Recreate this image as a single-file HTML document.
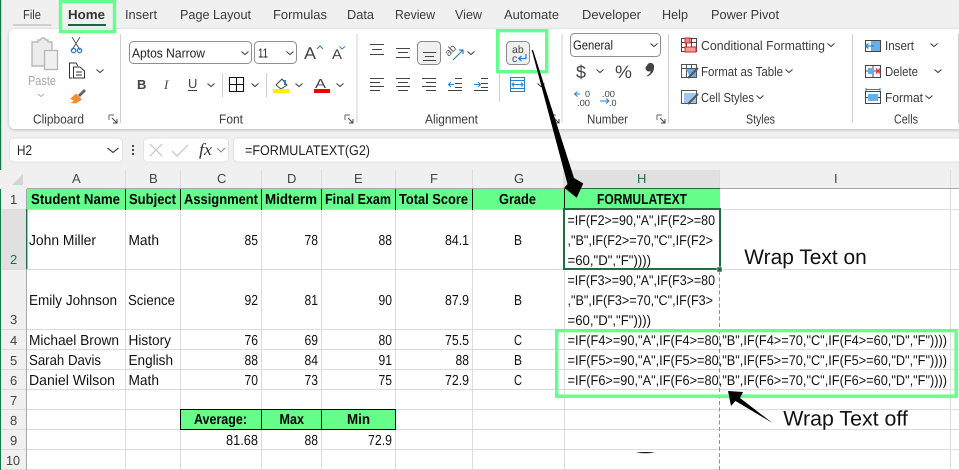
<!DOCTYPE html>
<html><head><meta charset="utf-8"><style>
html,body{margin:0;padding:0;background:#f0f0f0;width:959px;height:470px;overflow:hidden}
svg{display:block}
text{font-family:"Liberation Sans",sans-serif;white-space:pre}
.t{font-size:13px;fill:#3a3a3a}
.h{font-size:13px;fill:#444}
.c{font-size:14.500px;fill:#111}
.b{font-size:14.500px;font-weight:bold;fill:#000}
.f{font-size:14px;fill:#111}
.a{font-size:21px;fill:#111}
.ln{stroke:#444;stroke-width:1;fill:none}
.ch{fill:none;stroke:#444;stroke-width:1.1}
</style></head><body>
<svg width="959" height="470" viewBox="0 0 959 470" xmlns="http://www.w3.org/2000/svg" shape-rendering="geometricPrecision" text-rendering="geometricPrecision">
<defs>
<path id="chev" class="ch" d="M-3.5 -1.5L0 1.5L3.5 -1.5"/>
<g id="launch"><path d="M-4 -4H1M-4 -4V1" fill="none" stroke="#666" stroke-width="1"/><path d="M-1 -1L4 4M4 0V4H0" fill="none" stroke="#444" stroke-width="1"/></g>
<filter id="sh" x="-2%" y="-10%" width="104%" height="125%"><feDropShadow dx="0" dy="1" stdDeviation="1.5" flood-color="#000" flood-opacity=".22"/></filter>
</defs>
<rect width="959" height="470" fill="#f0f0f0"/>
<rect x="0" width="1.2" height="470" fill="#107c41"/>

<!-- Tabs -->
<g class="t">
<text x="23" y="19" textLength="18" lengthAdjust="spacingAndGlyphs">File</text>
<text x="68" y="19" textLength="37" lengthAdjust="spacingAndGlyphs" font-weight="bold" style="fill:#333">Home</text>
<text x="125" y="19" textLength="32" lengthAdjust="spacingAndGlyphs">Insert</text>
<text x="180" y="19" textLength="71" lengthAdjust="spacingAndGlyphs">Page Layout</text>
<text x="273" y="19" textLength="54" lengthAdjust="spacingAndGlyphs">Formulas</text>
<text x="347" y="19" textLength="27" lengthAdjust="spacingAndGlyphs">Data</text>
<text x="395" y="19" textLength="40" lengthAdjust="spacingAndGlyphs">Review</text>
<text x="455" y="19" textLength="27" lengthAdjust="spacingAndGlyphs">View</text>
<text x="504" y="19" textLength="55" lengthAdjust="spacingAndGlyphs">Automate</text>
<text x="582" y="19" textLength="59" lengthAdjust="spacingAndGlyphs">Developer</text>
<text x="662" y="19" textLength="26" lengthAdjust="spacingAndGlyphs">Help</text>
<text x="711" y="19" textLength="68" lengthAdjust="spacingAndGlyphs">Power Pivot</text>
</g>
<rect x="13" y="24" width="38" height="2" fill="#cfcfcf"/>
<rect x="68" y="24" width="38" height="2" fill="#0e6b3a"/>

<!-- Ribbon -->
<rect x="9" y="29" width="960" height="100" rx="6" fill="#fff" filter="url(#sh)"/>
<g fill="#d0d0d0">
<rect x="120" y="34" width="1" height="89"/><rect x="356.500" y="34" width="1" height="89"/><rect x="561.500" y="34" width="1" height="89"/><rect x="668" y="34" width="1" height="89"/><rect x="852" y="34" width="1" height="89"/><rect x="958" y="34" width="1" height="89"/>
<rect x="222" y="73" width="1" height="24"/><rect x="266" y="73" width="1" height="24"/><rect x="499" y="73" width="1" height="29"/>
</g>

<!-- Clipboard -->
<path d="M32 42H38V40H40L42 38H44L46 40H48V42H52V66H32Z" fill="#ececec" stroke="#b8b8b8" stroke-width="1.4"/>
<rect x="44.500" y="50.500" width="13" height="19" fill="#f0f0f0" stroke="#b8b8b8" stroke-width="1.4"/>
<path d="M72 37L80 50M80 37L72 50" stroke="#555" fill="none"/>
<circle cx="73.500" cy="50.500" r="2.200" fill="none" stroke="#2a7fc9" stroke-width="1.300"/><circle cx="79.500" cy="50.500" r="2.200" fill="none" stroke="#2a7fc9" stroke-width="1.300"/>
<path d="M72.500 78H69.500V63H76L78 66" fill="none" stroke="#333"/><path d="M73.500 67H80L84.500 71V78H73.500Z" fill="#fff" stroke="#333"/><path d="M76 72H82M76 75H82" stroke="#333"/>
<use href="#chev" x="100" y="71"/>
<path d="M85 90L79 96" stroke="#666" stroke-width="3"/><path d="M70 99L76 93.500L82 99.500L76 103.500L70.500 103L74 100.500Z" fill="#ef8f33"/>
<text class="t" x="28" y="85" textLength="28" lengthAdjust="spacingAndGlyphs" style="fill:#a8a8a8">Paste</text>
<path d="M38 94L41 96.500L44 94" fill="none" stroke="#aaa"/>
<text class="t" x="33" y="123.500" textLength="51" lengthAdjust="spacingAndGlyphs">Clipboard</text>
<use href="#launch" x="113" y="119"/>

<!-- Font -->
<rect x="129.500" y="41.500" width="122" height="22" rx="4" fill="#fff" stroke="#8e8e8e"/>
<text class="t" x="132" y="57.500" textLength="73" lengthAdjust="spacingAndGlyphs" style="fill:#222">Aptos Narrow</text>
<use href="#chev" x="245" y="53"/>
<rect x="254.500" y="41.500" width="42" height="22" rx="4" fill="#fff" stroke="#8e8e8e"/>
<text class="t" x="258" y="57.500" textLength="10" lengthAdjust="spacingAndGlyphs" style="fill:#222">11</text>
<use href="#chev" x="290" y="53"/>
<text x="304" y="59" font-size="17" fill="#444" textLength="12" lengthAdjust="spacingAndGlyphs">A</text>
<path d="M317 49L320 46L323 49" fill="none" stroke="#2a7fc9"/>
<text x="332" y="59" font-size="14" fill="#444" textLength="10" lengthAdjust="spacingAndGlyphs">A</text>
<path d="M339.500 46.500L342 49L345 46.500" fill="none" stroke="#2a7fc9"/>
<text x="137" y="89" font-size="13" font-weight="bold" fill="#444">B</text>
<text x="164" y="89" font-size="13" font-style="italic" fill="#444" style="font-family:'Liberation Serif',serif">I</text>
<text x="188" y="88" font-size="13" fill="#444">U</text><rect x="188" y="90" width="9" height="1" fill="#444"/>
<use href="#chev" x="211" y="85"/>
<path d="M229.500 77.500H243.500V91.500H229.500ZM236.500 77.500V91.500M229.500 84.500H243.500" fill="none" stroke="#111" stroke-width="1.100"/>
<use href="#chev" x="255" y="85"/>
<path d="M276 85L282 79L287 85L281 89Z" fill="#fff" stroke="#444"/><path d="M285 80V85" stroke="#2a7fc9" stroke-width="2"/>
<rect x="273" y="89" width="16" height="4" fill="#ffee00"/>
<use href="#chev" x="299" y="85"/>
<text x="315" y="88" font-size="13" fill="#444" textLength="11" lengthAdjust="spacingAndGlyphs">A</text>
<rect x="314" y="89" width="16" height="4" fill="#f00000"/>
<use href="#chev" x="340" y="85"/>
<text class="t" x="219" y="123.500" textLength="24" lengthAdjust="spacingAndGlyphs">Font</text>
<use href="#launch" x="349" y="119"/>

<!-- Alignment -->
<rect x="417.500" y="41.500" width="23" height="23" rx="4" fill="#f0f0f0" stroke="#8a8a8a"/>
<path class="ln" d="M370 44.500H384M372 49.500H382M370 54.500H384M396 48.500H410M398 52.500H408M396 57.500H410M423 52.500H436M425 56.500H434M423 60.500H436"/>
<text x="447" y="55" font-size="10.500" fill="#555" transform="rotate(-45 450 54)">ab</text>
<path d="M453 60L463 50M459 50H463V54" fill="none" stroke="#2a7fc9" stroke-width="1.200"/>
<use href="#chev" x="471" y="53"/>
<path class="ln" d="M370 78.500H384M370 82.500H380M370 86.500H384M370 90.500H380"/>
<path class="ln" d="M396 78.500H410M398 82.500H408M396 86.500H410M398 90.500H408"/>
<path class="ln" d="M422 78.500H436M426 82.500H436M422 86.500H436M426 90.500H436"/>
<path class="ln" d="M455 78.500H462M455 83.500H462M455 87.500H462M448 90.500H462"/>
<path d="M454 84.500H449M451 82L448.500 84.500L451 87" fill="none" stroke="#2a7fc9"/>
<path class="ln" d="M481 78.500H488M481 83.500H488M481 87.500H488M474 90.500H488"/>
<path d="M474 84.500H480M478 82L480.500 84.500L478 87" fill="none" stroke="#2a7fc9"/>
<rect x="510.500" y="77.500" width="14" height="14" fill="#fff" stroke="#2a7fc9"/>
<path d="M510 80.500H525M510 88.500H525" stroke="#2a7fc9" stroke-width="1"/>
<path d="M512 84.500H523M514 82.500L512 84.500L514 86.500M521 82.500L523 84.500L521 86.500" fill="none" stroke="#2a7fc9"/>
<use href="#chev" x="541" y="85"/>
<text class="t" x="425" y="123.500" textLength="53" lengthAdjust="spacingAndGlyphs">Alignment</text>
<use href="#launch" x="555" y="119"/>

<!-- Wrap button -->
<rect x="506.500" y="41.500" width="23" height="23" rx="4" fill="#f0f0f0" stroke="#8a8a8a"/>
<text x="512" y="53" font-size="10.500" fill="#444">ab</text>
<text x="512" y="62" font-size="10.500" fill="#444">c</text>
<path d="M526 54V58.500H519M521.500 56L518.500 58.500L521.500 61" fill="none" stroke="#2a7fc9" stroke-width="1.200"/>

<!-- Number -->
<rect x="570.500" y="33.500" width="90" height="23" rx="4" fill="#fff" stroke="#8e8e8e"/>
<text class="t" x="573" y="49.500" textLength="40" lengthAdjust="spacingAndGlyphs" style="fill:#222">General</text>
<use href="#chev" x="654" y="45"/>
<text x="576" y="78" font-size="18" fill="#444" textLength="10" lengthAdjust="spacingAndGlyphs">$</text>
<use href="#chev" x="600" y="71"/>
<text x="615" y="78" font-size="18" fill="#444" textLength="17" lengthAdjust="spacingAndGlyphs">%</text>
<path d="M647 65.500A3.200 3.200 0 0 1 654 67.500C654 72 651 75 647.500 76.500L647 75.500C649 74.500 650.500 73 650.500 71A3 3 0 0 1 647 65.500Z" fill="#444"/>
<path d="M580 94H575M577.500 91.500L574.500 94L577.500 96.500" fill="none" stroke="#2a7fc9"/>
<text x="585" y="97" font-size="9" fill="#444">0</text>
<text x="577" y="106" font-size="9" fill="#444" textLength="13" lengthAdjust="spacingAndGlyphs">.00</text>
<text x="602" y="97" font-size="9" fill="#444" textLength="13" lengthAdjust="spacingAndGlyphs">.00</text>
<path d="M600 101H608M606 98.500L609 101L606 103.500" fill="none" stroke="#2a7fc9"/>
<text x="609" y="106" font-size="9" fill="#444">.0</text>
<text class="t" x="587" y="123.500" textLength="41" lengthAdjust="spacingAndGlyphs">Number</text>
<use href="#launch" x="661" y="119"/>

<!-- Styles -->
<path d="M681.500 38.500H696.500V51.500H681.500ZM681.500 42.500H696.500M681.500 47.500H696.500M686.500 38.500V51.500M691.500 38.500V51.500" fill="#fff" stroke="#444"/>
<rect x="685" y="38" width="5" height="5" fill="#e88" stroke="#d22"/><rect x="685" y="47" width="11" height="5" fill="#f59a9a" stroke="#d22"/><rect x="685.500" y="43" width="1" height="4" fill="#d22"/>
<path d="M681.500 64.500H696.500V77.500H681.500ZM681.500 68.500H696.500M686.500 64.500V77.500M691.500 64.500V77.500" fill="#fff" stroke="#555"/>
<path d="M686 69H696V77H690Z" fill="#6aaee6"/><path d="M698 68L688 78" stroke="#555" stroke-width="2"/>
<path d="M681.500 90.500H696.500V103.500H681.500Z" fill="#fff" stroke="#555"/><path d="M684 93H696V103H684Z" fill="#9cc7ee"/><path d="M698 94L688 104" stroke="#555" stroke-width="2"/>
<g class="t">
<text x="701" y="50" textLength="124" lengthAdjust="spacingAndGlyphs">Conditional Formatting</text>
<text x="701" y="76" textLength="82" lengthAdjust="spacingAndGlyphs">Format as Table</text>
<text x="701" y="102" textLength="53" lengthAdjust="spacingAndGlyphs">Cell Styles</text>
<text x="746" y="123.500" textLength="29" lengthAdjust="spacingAndGlyphs">Styles</text>
</g>
<use href="#chev" x="831" y="45"/><use href="#chev" x="789" y="71"/><use href="#chev" x="760" y="97"/>

<!-- Cells -->
<path d="M865.500 40.500H880.500V51.500H865.500ZM865.500 46H880.500M873 40.500V51.500" fill="#fff" stroke="#444"/>
<rect x="871" y="41" width="9" height="10" fill="#6aaee6"/><path d="M874 46H866M868.500 43.500L865.500 46L868.500 48.500" fill="none" stroke="#2a7fc9" stroke-width="1.200"/>
<path d="M865.500 65.500H880.500V77.500H865.500ZM865.500 71H880.500M873 65.500V77.500" fill="#fff" stroke="#444"/>
<rect x="868" y="68" width="6" height="6" fill="#6aaee6"/><path d="M876 68.500L880 73.500M880 68.500L876 73.500" stroke="#e33" stroke-width="1.400"/>
<path d="M865.500 91.500H880.500V103.500H865.500ZM865.500 97.500H880.500" fill="#fff" stroke="#444"/>
<rect x="868" y="94" width="10" height="7" fill="#6aaee6"/><path d="M866 89.500H880M866 88V91M880 88V91" stroke="#2a7fc9"/>
<g class="t">
<text x="885" y="50" textLength="29" lengthAdjust="spacingAndGlyphs">Insert</text>
<text x="885" y="76" textLength="33" lengthAdjust="spacingAndGlyphs">Delete</text>
<text x="885" y="102" textLength="38" lengthAdjust="spacingAndGlyphs">Format</text>
<text x="894" y="123.500" textLength="24" lengthAdjust="spacingAndGlyphs">Cells</text>
</g>
<use href="#chev" x="934" y="45"/><use href="#chev" x="938" y="71"/><use href="#chev" x="929" y="97"/>

<!-- Formula bar -->
<rect x="9.500" y="138" width="113" height="24" rx="4" fill="#fff" stroke="#e2e2e2"/>
<text x="17" y="155" font-size="14" fill="#222" textLength="15" lengthAdjust="spacingAndGlyphs">H2</text>
<path d="M107.500 148L113 152.500L118.500 148" fill="none" stroke="#444" stroke-width="1.200"/>
<g fill="#444"><rect x="132" y="145" width="2" height="2"/><rect x="132" y="149" width="2" height="2"/><rect x="132" y="153" width="2" height="2"/></g>
<rect x="143.500" y="138" width="85" height="24" rx="4" fill="#fff" stroke="#e2e2e2"/>
<path d="M150 144L162 156M162 144L150 156" stroke="#c4c4c4" stroke-width="1.200"/>
<path d="M172 151L177 156L188 145" fill="none" stroke="#c4c4c4" stroke-width="1.200"/>
<text x="199" y="155" font-size="17" font-style="italic" fill="#333" textLength="13" lengthAdjust="spacingAndGlyphs" style="font-family:'Liberation Serif',serif">fx</text>
<path d="M217 148L221 152L225 148" fill="none" stroke="#888"/>
<rect x="233.500" y="138" width="730" height="24" rx="4" fill="#fff" stroke="#e2e2e2"/>
<text x="245" y="155" font-size="14" fill="#222" textLength="125" lengthAdjust="spacingAndGlyphs">=FORMULATEXT(G2)</text>

<!-- Sheet -->
<rect x="0" y="170" width="959" height="19" fill="#f0f0f0"/>
<rect x="1" y="189" width="26" height="281" fill="#f0f0f0"/>
<rect x="27" y="189" width="932" height="281" fill="#fff"/>
<rect x="564" y="170" width="156" height="19" fill="#e0e0e0"/>
<rect x="1" y="209" width="26" height="60" fill="#e0e0e0"/>
<path d="M12 185H23V174Z" fill="#d4d4d4"/>
<rect x="27" y="188" width="932" height="1" fill="#a8a8a8"/>
<rect x="26" y="189" width="1" height="281" fill="#a8a8a8"/>
<rect x="564" y="188" width="156" height="1.400" fill="#1f6e43"/>
<g fill="#dcdcdc"><rect x="125" y="170" width="1" height="18"/><rect x="180" y="170" width="1" height="18"/><rect x="261" y="170" width="1" height="18"/><rect x="321" y="170" width="1" height="18"/><rect x="395" y="170" width="1" height="18"/><rect x="472" y="170" width="1" height="18"/><rect x="563" y="170" width="1" height="18"/><rect x="719" y="170" width="1" height="18"/><rect x="950" y="170" width="1" height="18"/></g>
<g fill="#dcdcdc">
<rect x="125" y="189" width="1" height="281"/><rect x="180" y="189" width="1" height="281"/><rect x="261" y="189" width="1" height="281"/><rect x="321" y="189" width="1" height="281"/><rect x="395" y="189" width="1" height="281"/><rect x="472" y="189" width="1" height="281"/><rect x="564" y="189" width="1" height="281"/><rect x="950" y="189" width="1" height="281"/>
<rect x="1" y="209" width="958" height="1"/><rect x="1" y="269" width="958" height="1"/><rect x="1" y="329" width="958" height="1"/><rect x="1" y="349" width="958" height="1"/><rect x="1" y="369" width="958" height="1"/><rect x="1" y="389" width="958" height="1"/><rect x="1" y="409" width="958" height="1"/><rect x="1" y="429" width="958" height="1"/><rect x="1" y="449" width="958" height="1"/><rect x="1" y="469" width="958" height="1"/>
</g>
<rect x="26" y="189" width="1" height="20" fill="#a8a8a8"/>
<rect x="26" y="209" width="1.400" height="60" fill="#1f6e43"/>
<rect x="26" y="269" width="1" height="201" fill="#a8a8a8"/>
<!-- Header row -->
<rect x="27" y="189" width="693" height="20.500" fill="#66ff8c"/>
<g fill="#111"><rect x="125" y="189" width="1" height="21"/><rect x="180" y="189" width="1" height="21"/><rect x="261" y="189" width="1" height="21"/><rect x="321" y="189" width="1" height="21"/><rect x="395" y="189" width="1" height="21"/><rect x="472" y="189" width="1" height="21"/><rect x="564" y="189" width="1" height="21"/></g>
<!-- Row 8 header cells -->
<rect x="180.500" y="409.500" width="215" height="20" fill="#66ff8c" stroke="#000"/>
<path d="M261.500 409.500V429.500M321.500 409.500V429.500" stroke="#000"/>

<!-- Column letters -->
<g class="h">
<text x="72" y="183">A</text><text x="149" y="183">B</text><text x="217" y="183">C</text><text x="287" y="183">D</text><text x="354" y="183">E</text><text x="430" y="183">F</text><text x="514" y="183">G</text><text x="637" y="183" style="fill:#1f6e43">H</text><text x="834" y="183">I</text>
</g>
<!-- Row numbers -->
<g class="h">
<text x="10" y="204">1</text><text x="10" y="264" style="fill:#1f6e43">2</text><text x="10" y="324">3</text><text x="10" y="345">4</text><text x="10" y="365">5</text><text x="10" y="385">6</text><text x="10" y="405">7</text><text x="10" y="425">8</text><text x="10" y="445">9</text><text x="6" y="465" textLength="14" lengthAdjust="spacingAndGlyphs">10</text>
</g>

<!-- Header text -->
<g class="b">
<text x="31" y="204" textLength="89" lengthAdjust="spacingAndGlyphs">Student Name</text>
<text x="129" y="204" textLength="47" lengthAdjust="spacingAndGlyphs">Subject</text>
<text x="184" y="204" textLength="74" lengthAdjust="spacingAndGlyphs">Assignment</text>
<text x="265" y="204" textLength="52" lengthAdjust="spacingAndGlyphs">Midterm</text>
<text x="325" y="204" textLength="66" lengthAdjust="spacingAndGlyphs">Final Exam</text>
<text x="399" y="204" textLength="69" lengthAdjust="spacingAndGlyphs">Total Score</text>
<text x="499" y="204" textLength="37" lengthAdjust="spacingAndGlyphs">Grade</text>
<text x="597" y="204" textLength="90" lengthAdjust="spacingAndGlyphs">FORMULATEXT</text>
<text x="194" y="424" textLength="53" lengthAdjust="spacingAndGlyphs">Average:</text>
<text x="279.500" y="424" textLength="24.500" lengthAdjust="spacingAndGlyphs">Max</text>
<text x="347" y="424" textLength="23" lengthAdjust="spacingAndGlyphs">Min</text>
</g>

<!-- Data -->
<g class="c">
<text x="29" y="245" textLength="67" lengthAdjust="spacingAndGlyphs">John Miller</text>
<text x="128.500" y="245" textLength="30.500" lengthAdjust="spacingAndGlyphs">Math</text>
<text x="244.500" y="245" textLength="13.500" lengthAdjust="spacingAndGlyphs">85</text>
<text x="304.500" y="245" textLength="13.500" lengthAdjust="spacingAndGlyphs">78</text>
<text x="378.500" y="245" textLength="13.500" lengthAdjust="spacingAndGlyphs">88</text>
<text x="445" y="245" textLength="24" lengthAdjust="spacingAndGlyphs">84.1</text>
<text x="514" y="245" textLength="8" lengthAdjust="spacingAndGlyphs">B</text>

<text x="29" y="305" textLength="88" lengthAdjust="spacingAndGlyphs">Emily Johnson</text>
<text x="128" y="305" textLength="47" lengthAdjust="spacingAndGlyphs">Science</text>
<text x="244.500" y="305" textLength="13.500" lengthAdjust="spacingAndGlyphs">92</text>
<text x="304.500" y="305" textLength="13.500" lengthAdjust="spacingAndGlyphs">81</text>
<text x="378.500" y="305" textLength="13.500" lengthAdjust="spacingAndGlyphs">90</text>
<text x="445" y="305" textLength="24" lengthAdjust="spacingAndGlyphs">87.9</text>
<text x="514" y="305" textLength="8" lengthAdjust="spacingAndGlyphs">B</text>

<text x="29" y="345" textLength="90" lengthAdjust="spacingAndGlyphs">Michael Brown</text>
<text x="128.500" y="345" textLength="42.500" lengthAdjust="spacingAndGlyphs">History</text>
<text x="244.500" y="345" textLength="13.500" lengthAdjust="spacingAndGlyphs">76</text>
<text x="304.500" y="345" textLength="13.500" lengthAdjust="spacingAndGlyphs">69</text>
<text x="378.500" y="345" textLength="13.500" lengthAdjust="spacingAndGlyphs">80</text>
<text x="445" y="345" textLength="24" lengthAdjust="spacingAndGlyphs">75.5</text>
<text x="514" y="345" textLength="8" lengthAdjust="spacingAndGlyphs">C</text>

<text x="29" y="365" textLength="72" lengthAdjust="spacingAndGlyphs">Sarah Davis</text>
<text x="128.500" y="365" textLength="44.500" lengthAdjust="spacingAndGlyphs">English</text>
<text x="244.500" y="365" textLength="13.500" lengthAdjust="spacingAndGlyphs">88</text>
<text x="304.500" y="365" textLength="13.500" lengthAdjust="spacingAndGlyphs">84</text>
<text x="378.500" y="365" textLength="13.500" lengthAdjust="spacingAndGlyphs">91</text>
<text x="455.500" y="365" textLength="13.500" lengthAdjust="spacingAndGlyphs">88</text>
<text x="514" y="365" textLength="8" lengthAdjust="spacingAndGlyphs">B</text>

<text x="29" y="385" textLength="86" lengthAdjust="spacingAndGlyphs">Daniel Wilson</text>
<text x="128.500" y="385" textLength="30.500" lengthAdjust="spacingAndGlyphs">Math</text>
<text x="244.500" y="385" textLength="13.500" lengthAdjust="spacingAndGlyphs">70</text>
<text x="304.500" y="385" textLength="13.500" lengthAdjust="spacingAndGlyphs">73</text>
<text x="378.500" y="385" textLength="13.500" lengthAdjust="spacingAndGlyphs">75</text>
<text x="445" y="385" textLength="24" lengthAdjust="spacingAndGlyphs">72.9</text>
<text x="514" y="385" textLength="8" lengthAdjust="spacingAndGlyphs">C</text>

<text x="226" y="445" textLength="32" lengthAdjust="spacingAndGlyphs">81.68</text>
<text x="304.500" y="445" textLength="13.500" lengthAdjust="spacingAndGlyphs">88</text>
<text x="368" y="445" textLength="24" lengthAdjust="spacingAndGlyphs">72.9</text>
</g>

<!-- Formula cells -->
<rect x="565" y="270" width="154" height="59" fill="#fff"/>
<rect x="565" y="330" width="385" height="19" fill="#fff"/><rect x="565" y="350" width="385" height="19" fill="#fff"/><rect x="565" y="370" width="385" height="19" fill="#fff"/>
<g class="f">
<text x="567.500" y="225" textLength="147.500" lengthAdjust="spacingAndGlyphs">=IF(F2&gt;=90,"A",IF(F2&gt;=80</text>
<text x="567.500" y="245" textLength="145.500" lengthAdjust="spacingAndGlyphs">,"B",IF(F2&gt;=70,"C",IF(F2&gt;</text>
<text x="567.500" y="265" textLength="83.500" lengthAdjust="spacingAndGlyphs">=60,"D","F"))))</text>
<text x="567.500" y="285" textLength="147.500" lengthAdjust="spacingAndGlyphs">=IF(F3&gt;=90,"A",IF(F3&gt;=80</text>
<text x="567.500" y="305" textLength="145.500" lengthAdjust="spacingAndGlyphs">,"B",IF(F3&gt;=70,"C",IF(F3&gt;</text>
<text x="567.500" y="325" textLength="83.500" lengthAdjust="spacingAndGlyphs">=60,"D","F"))))</text>
<text x="567.500" y="345" textLength="379.500" lengthAdjust="spacingAndGlyphs">=IF(F4&gt;=90,"A",IF(F4&gt;=80,"B",IF(F4&gt;=70,"C",IF(F4&gt;=60,"D","F"))))</text>
<text x="567.500" y="365" textLength="379.500" lengthAdjust="spacingAndGlyphs">=IF(F5&gt;=90,"A",IF(F5&gt;=80,"B",IF(F5&gt;=70,"C",IF(F5&gt;=60,"D","F"))))</text>
<text x="567.500" y="385" textLength="379.500" lengthAdjust="spacingAndGlyphs">=IF(F6&gt;=90,"A",IF(F6&gt;=80,"B",IF(F6&gt;=70,"C",IF(F6&gt;=60,"D","F"))))</text>
</g>

<!-- Selection -->
<path d="M719.500 271V470" stroke="#8f8f8f" stroke-dasharray="4 2.500" fill="none"/>
<rect x="564" y="209" width="156" height="60" fill="none" stroke="#1f6e43" stroke-width="2"/>
<rect x="717" y="267" width="5" height="5" fill="#1f6e43" stroke="#fff" stroke-width=".5"/>

<!-- Annotations -->
<g fill="none" stroke="#66ff8c" stroke-width="3.400">
<path d="M60.500 33V1.500H114.500V31.500H60.500"/>
<rect x="497.700" y="30.700" width="49" height="41"/>
<rect x="556.700" y="330.700" width="399.500" height="65.500"/>
</g>
<path d="M531.700 50L533 50L574 178L583.300 183.500L576.700 197.700L564.300 187.700L567.500 184Z" fill="#000"/>
<path d="M728 391L743 392L740 398L772.500 423L735.500 401L731 406Z" fill="#000"/>
<path d="M636 452.500Q645 451.500 655 452.500Q645 454 636 452.500Z" fill="#111"/>
<text class="a" x="744.300" y="264" textLength="122.500" lengthAdjust="spacingAndGlyphs">Wrap Text on</text>
<text class="a" x="783.300" y="425.700" textLength="124.500" lengthAdjust="spacingAndGlyphs">Wrap Text off</text>
</svg>
</body></html>
